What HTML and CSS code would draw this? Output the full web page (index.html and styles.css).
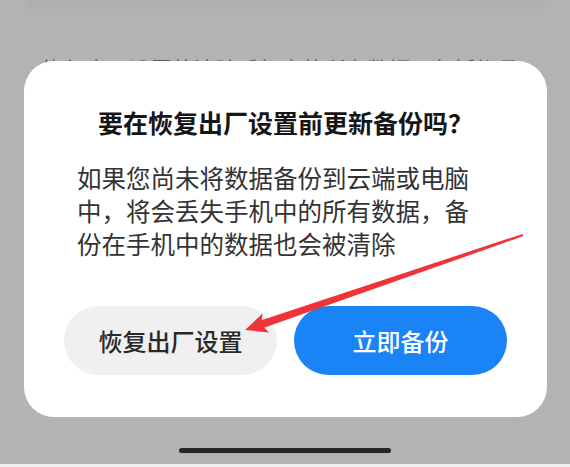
FILE: index.html
```html
<!DOCTYPE html>
<html lang="zh-CN">
<head>
<meta charset="utf-8">
<title>恢复出厂设置</title>
<link rel="stylesheet" href="styles.css">
</head>
<body>
<div class="screen">
  <div class="bg-card"></div>
  <p class="bg-text">恢复出厂设置将清除手机中的所有数据，包括帐号</p>

  <div class="dialog">
    <h1 class="dialog-title">要在恢复出厂设置前更新备份吗？</h1>
    <p class="dialog-body">如果您尚未将数据备份到云端或电脑<br>中，将会丢失手机中的所有数据，备<br>份在手机中的数据也会被清除</p>
    <div class="dialog-actions">
      <button class="btn btn-secondary">恢复出厂设置</button>
      <button class="btn btn-primary">立即备份</button>
    </div>
  </div>

  <svg class="arrow" width="570" height="467" viewBox="0 0 570 467">
    <polygon fill="#ee3437" points="523.4,236.1 522.6,233.9 259.8,320.7 262.4,328.3"/>
    <polygon fill="#ee3437" points="245,330 269.0,332.4 261.1,324.5 262.6,313.4"/>
  </svg>

  <div class="home-indicator"></div>
  <div class="bottom-strip"></div>
</div>
</body>
</html>
```

FILE: styles.css
```css
html, body {
  margin: 0;
  padding: 0;
}
body {
  font-family: "Noto Sans CJK SC", "Noto Sans", sans-serif;
  background: #b3b3b3;
}
.screen {
  position: relative;
  width: 570px;
  height: 467px;
  overflow: hidden;
  background: #b3b3b3;
}
.bg-card {
  margin: 0 24px;
  height: 9px;
  background: #afafaf;
  border-radius: 0 0 20px 20px;
}
.bg-text {
  margin: 48px 0 0 42px;
  font-size: 21.7px;
  line-height: 24px;
  color: #5a5a5a;
  white-space: nowrap;
}
.dialog {
  position: absolute;
  left: 24px;
  top: 61px;
  width: 523px;
  height: 356px;
  box-sizing: border-box;
  background: #fff;
  border-radius: 30px;
  padding: 45px 40px 0;
  display: flex;
  flex-direction: column;
}
.dialog-title {
  margin: 0;
  font-size: 25px;
  line-height: 32px;
  font-weight: 700;
  color: #161616;
  text-align: center;
  white-space: nowrap;
}
.dialog-body {
  margin: 23px 0 0 13px;
  font-size: 24.5px;
  line-height: 33px;
  color: #333;
  white-space: nowrap;
}
.dialog-actions {
  margin-top: 46px;
  display: flex;
  gap: 17px;
}
.btn {
  flex: 1;
  height: 69px;
  border: none;
  border-radius: 35px;
  font-family: inherit;
  font-size: 24px;
  font-weight: 500;
  padding: 0;
}
.btn-secondary {
  background: #f0f0f0;
  color: #2a2a2a;
}
.btn-primary {
  background: #1a84f6;
  color: #fff;
}
.arrow {
  position: absolute;
  left: 0;
  top: 0;
  pointer-events: none;
}
.home-indicator {
  position: absolute;
  left: 179px;
  top: 448px;
  width: 212px;
  height: 5px;
  border-radius: 3px;
  background: #262626;
}
.bottom-strip {
  position: absolute;
  left: 0;
  right: 0;
  bottom: 0;
  height: 3px;
  background: #f0f0f0;
}
```
